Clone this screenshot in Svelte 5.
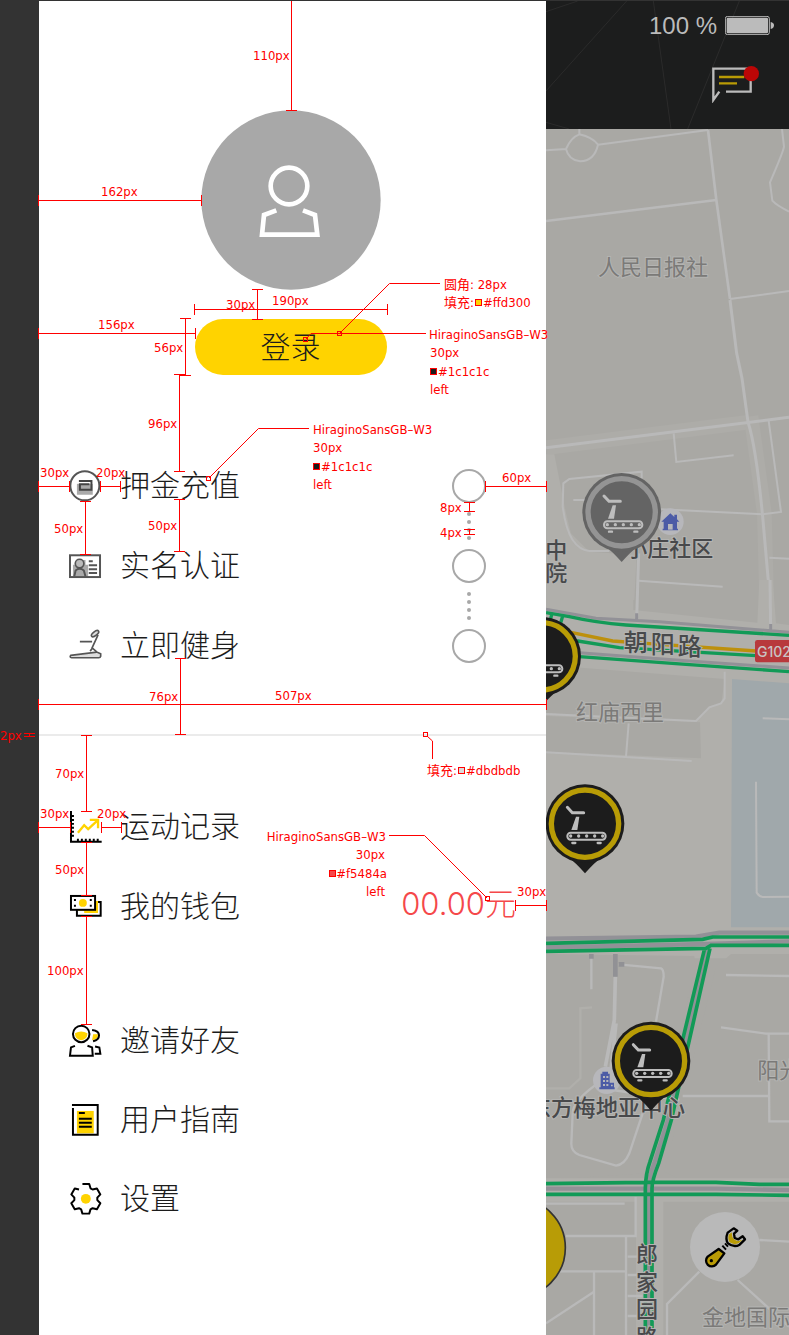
<script>
  const account = [
    { label: '押金充值', icon: 'deposit' },
    { label: '实名认证', icon: 'identity' },
    { label: '立即健身', icon: 'treadmill' }
  ];
  const records = [
    { label: '运动记录', icon: 'chart' },
    { label: '我的钱包', icon: 'wallet', amount: '00.00元' }
  ];
  const more = [
    { label: '邀请好友', icon: 'friends' },
    { label: '用户指南', icon: 'guide' },
    { label: '设置', icon: 'gear' }
  ];

  const pins = [
    { x: 227, y: 1537, off: true },
    { x: -13, y: 1969 },
    { x: 117, y: 2471 },
    { x: 315, y: 3183 }
  ];

  // Horizontal measures: x1, x2, y
  const across = [
    [38, 201, 200], [194, 387, 309], [38, 195, 333], [38, 69, 486], [100, 120, 486],
    [485, 546, 486], [38, 546, 704], [38, 70, 827], [101, 121, 827], [515, 546, 905]
  ];
  // Vertical measures: x, y1, y2
  const down = [
    [291, 0, 110], [257, 289, 319], [185, 318, 375], [179, 374, 471], [85, 501, 554],
    [179, 499, 551], [469, 502, 511], [469, 529, 534], [180, 658, 734], [29, 733, 736],
    [86, 735, 811], [86, 842, 895], [86, 916, 1024]
  ];
  const notes = [
    [253, 60, '110px'], [101, 196, '162px'], [226, 309, '30px'], [272, 305, '190px'],
    [98, 329, '156px'], [154, 352, '56px'], [148, 428, '96px'], [40, 477, '30px'],
    [96, 477, '20px'], [54, 533, '50px'], [148, 530, '50px'], [502, 482, '60px'],
    [440, 512, '8px'], [440, 537, '4px'], [149, 701, '76px'], [275, 700, '507px'],
    [0, 740, '2px'], [55, 778, '70px'], [40, 818, '30px'], [97, 818, '20px'],
    [55, 874, '50px'], [517, 896, '30px'], [47, 975, '100px'],
    [444, 289, '圆角: 28px'], [444, 307, '填充:'], [483, 307, '#ffd300'],
    [429, 339, 'HiraginoSansGB–W3'], [430, 357, '30px'], [438, 376, '#1c1c1c'], [430, 394, 'left'],
    [313, 434, 'HiraginoSansGB–W3'], [313, 452, '30px'], [321, 471, '#1c1c1c'], [313, 489, 'left'],
    [427, 775, '填充:'], [466, 775, '#dbdbdb']
  ];
  const endNotes = [
    [386, 841, 'HiraginoSansGB–W3'], [385, 859, '30px'], [387, 878, '#f5484a'], [385, 896, 'left']
  ];
  const swatches = [
    [475, 299, '#ffd300'], [430, 368, '#1c1c1c'], [313, 463, '#1c1c1c'],
    [458, 767, '#dbdbdb'], [329, 870, '#f5484a']
  ];
  const leaders = [
    'M440 283.5H389.5L340 333', 'M426 333.5H311L306 339', 'M309 428.5H258.5L209 478',
    'M427 736L432.5 741V759', 'M389 835.5H424.5L487 898'
  ];
  const targets = [[339, 333], [305, 339], [208, 478], [425, 734], [487, 898]];

  const gear = Array.from({ length: 6 }, (_, k) =>
    [[-24, 35], [-13, 46], [13, 46], [24, 35]].map(([a, r]) => {
      const t = ((k * 60 + a - 90) * Math.PI) / 180;
      return `${(51 + r * Math.cos(t)).toFixed(1)},${(48 + r * Math.sin(t)).toFixed(1)}`;
    })
  ).flat().slice(1).join(' ');
</script>

{#snippet icon(name)}
  <svg class="icon" viewBox="0 0 100 100" aria-hidden="true">
    {#if name === 'deposit'}
      <circle cx="48" cy="48" r="44" fill="#fff" stroke="#555" stroke-width="6" />
      <path d="M24 42H72V75H24Z" fill="#aaa" />
      <path d="M30 33H68V60H33V43H62" fill="none" stroke="#444" stroke-width="6" />
    {:else if name === 'identity'}
      <path d="M12 45H30V30H50V45H58V80H12Z" fill="#aaa" />
      <rect x="3" y="16" width="91" height="66" fill="none" stroke="#555" stroke-width="6" />
      <circle cx="32" cy="41" r="13" fill="#bbb" stroke="#555" stroke-width="5" />
      <path d="M16 80L20 62Q32 52 45 62L50 80M60 34H72M60 46H85M60 58H85M60 70H85" fill="none" stroke="#555" stroke-width="6" />
    {:else if name === 'treadmill'}
      <path d="M5 77L84 67L96 72V80Q95 84 90 84H8Q1 83 5 77Z" fill="#ddd" stroke="#555" stroke-width="5" />
      <path d="M33 35H70M88 15L70 54L84 66M72 54L64 64" fill="none" stroke="#555" stroke-width="5" />
      <ellipse cx="79" cy="11" rx="13" ry="6" transform="rotate(-38 79 11)" fill="#ddd" stroke="#555" stroke-width="5" />
    {:else if name === 'chart'}
      <path d="M6 0V93H99M9 15H15M9 27H15M9 39H15M9 51H15M9 63H15M9 75H15M27 90V84M39 90V84M51 90V84M63 90V84M75 90V84M87 90V84" fill="none" stroke="#000" stroke-width="6" />
      <path d="M27 66L46 43L58 55L86 29M63 27H88V52" fill="none" stroke="#ffd300" stroke-width="7" />
    {:else if name === 'wallet'}
      <path d="M24 54V75H96V33H82" fill="none" stroke="#000" stroke-width="6" />
      <path d="M27 57H81V30H88V67H46V60H27Z" fill="#ffd300" />
      <rect x="6" y="15" width="73" height="42" fill="#fff" stroke="#000" stroke-width="6" />
      <circle cx="42" cy="36" r="12" fill="#ffd300" />
      <path d="M15 24h6v6h-6zM15 42h6v6h-6zM63 24h6v6h-6zM63 42h6v6h-6z" />
    {:else if name === 'friends'}
      <path d="M18 25Q37 15 56 25Q56 45 37 46Q18 45 18 25Z" fill="#ffd300" />
      <circle cx="37" cy="27" r="25" fill="none" stroke="#000" stroke-width="6" />
      <path d="M73 28H88Q88 44 70 46Z" fill="#ffd300" />
      <path d="M18 63L6 68L3 93H72L70 68L56 63M70 15Q91 18 91 31Q91 45 73 49M79 65L92 68L95 87H78" fill="none" stroke="#000" stroke-width="6" />
    {:else if name === 'guide'}
      <path d="M24 21H75V89H24Z" fill="#ffd300" />
      <path d="M9 3H87V93H12V12M30 27H48M30 45H69M30 57H69M30 69H69" fill="none" stroke="#000" stroke-width="6" />
    {:else}
      <polyline points={gear} fill="none" stroke="#000" stroke-width="6" stroke-linejoin="round" />
      <circle cx="51" cy="48" r="15" fill="#ffd300" />
    {/if}
  </svg>
{/snippet}

{#snippet menu(items)}
  <ul class="menu">
    {#each items as item}
      <li>
        <a href="#{item.icon}">
          {@render icon(item.icon)}
          <span>{item.label}</span>
          {#if item.amount}<strong>{item.amount}</strong>{/if}
        </a>
      </li>
    {/each}
  </ul>
{/snippet}

<div class="page">
  <div class="edge"></div>

  <nav class="drawer">
    <div class="profile">
      <svg class="avatar" viewBox="0 0 540 540" aria-hidden="true">
        <circle cx="270" cy="270" r="269" fill="#a8a8a8" />
        <g fill="none" stroke="#fff" stroke-width="14">
          <circle cx="264" cy="228" r="55" />
          <path d="M226 301L189 315L183 374H349L342 315L306 301" />
        </g>
      </svg>
      <button class="login" type="button">登录</button>
    </div>

    <div class="account">
      {@render menu(account)}
      <div class="steps">
        <i class="ring"></i>
        <span class="dots"><i></i><i></i><i></i><i></i></span>
        <i class="ring"></i>
        <span class="dots"><i></i><i></i><i></i><i></i></span>
        <i class="ring"></i>
      </div>
    </div>
    <hr />
    {@render menu(records)}
    <div class="more">{@render menu(more)}</div>
  </nav>

  <main>
    <header>
      <svg class="rays" viewBox="0 0 729 384" preserveAspectRatio="xMinYMin slice" aria-hidden="true">
        <path d="M0 270L242 0M322 0L375 384M580 0L425 384M0 32L95 0M0 364L70 384" fill="none" stroke="#2b2b2b" stroke-width="3" />
      </svg>
      <div class="status">
        <span>100 %</span>
        <svg width="49" height="19" viewBox="0 0 147 57" aria-hidden="true">
          <rect x="1" y="1" width="132" height="55" rx="7" fill="none" stroke="#bbb" stroke-width="3" />
          <rect x="5" y="5" width="124" height="47" rx="4" fill="#bbb" />
          <path d="M137 18Q147 20 147 28Q147 37 137 39Z" fill="#bbb" />
        </svg>
      </div>
      <button class="message" type="button" aria-label="消息">
        <svg width="47" height="37" viewBox="0 0 141 111" aria-hidden="true">
          <path d="M42 77H116V8H4V102L22 77" fill="none" stroke="#bbb" stroke-width="7" />
          <path d="M21 33H97M21 52H75" stroke="#b99b05" stroke-width="7" />
          <circle cx="118" cy="23" r="23" fill="#bb0606" />
        </svg>
      </button>
    </header>

    <section class="map">
      <svg class="chart" viewBox="0 387 729 3618" preserveAspectRatio="xMinYMin slice">
        <rect width="729" height="4005" fill="#a9a8a4" />
        <g fill="none" stroke="#b9b9b9" stroke-width="6">
          <path d="M0 663L511 600M486 390L511 600L552 897" stroke-width="8" />
          <path d="M552 897L729 873M0 451L60 447Q75 412 100 403Q140 412 156 434Q145 483 102 484Q68 480 60 447M100 403V387M156 434L486 390M708 387L714 440Q712 455 672 547L679 602Q690 615 729 635" />
        </g>
        <g transform="translate(0 900)">
          <path d="M0 443L606 367" stroke="#adaca8" stroke-width="44" />
          <path d="M615 349L655 640L662 900" fill="none" stroke="#adaca8" stroke-width="44" />
          <path d="M0 463H25L60 640L75 700L130 755L272 765L265 900H0Z" fill="#b0afab" />
          <g fill="none" stroke="#b9b9b9" stroke-width="6">
            <path d="M552 0L572 160L588 235L606 366Q630 440 650 650L672 900M0 443L729 352" stroke-width="9" />
            <path d="M383 400L391 486L563 466M668 362L705 636L650 643L345 628M287 535V515L70 537L52 550L50 620Q60 690 80 720Q100 750 130 753H190M82 600H130M670 773L729 776" />
          </g>
        </g>
        <g transform="translate(0 1740)">
          <path d="M0 0H262V90L634 128L640 0H680L690 130L729 135V1135H0Z" fill="#b0afab" />
          <path d="M0 255L536 297L526 370L490 380L450 423L0 400ZM0 408L462 427L465 535L0 515Z" fill="#a9a8a4" />
          <path d="M558 297L729 310V1042H555Z" fill="#a0a8ab" />
          <g fill="none" stroke="#b9b9b9" stroke-width="6">
            <path d="M278 -80L272 118M672 0L674 150" stroke-width="9" />
            <path d="M278 2L530 20M536 275V355L525 370L490 382L450 423L0 402M248 430L240 530M0 517L437 543M650 415L729 418M630 605L632 938Q640 950 650 951L729 950" />
          </g>
          <path d="M0 88L150 115L340 125L729 157M0 213L100 218L420 242L729 264M272 100V125M674 132V155" fill="none" stroke="#929197" stroke-width="9" />
          <path d="M0 98L70 110Q150 128 240 135L729 166M0 160L95 183L220 203L630 227M18 100L8 140M50 108L38 150M0 223L100 230L420 253L729 275" fill="none" stroke="#129a57" stroke-width="10" />
          <path d="M60 154L200 183L300 190L630 213" fill="none" stroke="#bd900c" stroke-width="10" />
          <rect x="627" y="180" width="120" height="67" rx="7" fill="#b8393c" />
          <text class="badge" x="633" y="230">G102</text>
        </g>
        <g transform="translate(0 2640)">
          <path d="M0 222L445 228L448 260L300 880L0 900ZM555 222H729V900L400 898L355 875L510 262Z" fill="#a9a8a4" />
          <path d="M270 950H352V1365H270ZM0 895H729V965H0Z" fill="#b0afab" />
          <g fill="none" stroke="#b9b9b9" stroke-width="7">
            <path d="M208 290L205 420M205 420L178 560M210 430L195 570" stroke-width="11" />
            <path d="M136 222V328M218 253L345 265Q353 268 353 290L330 425M540 285L729 288M525 442L660 461H729M668 461L670 724H729M410 648H668M200 630L400 660M170 600Q80 660 80 700L76 790Q75 815 100 825L210 857Q235 855 250 820L290 700" />
            <path d="M0 971H236M269 950V1068H60M240 1068V1365M20 1174H240M144 1175V1365M0 1330L144 1235M245 1130H290M245 1185H290M245 1248H290M245 1308H290M640 1080L729 1085M460 1175L363 1272V1365M575 1200L729 1340" />
            <path d="M0 625H70L103 595V385L138 382" stroke="#b0afab" />
          </g>
          <path d="M208 222V290M136 222V236M218 253H235" fill="none" stroke="#919195" stroke-width="14" />
          <path d="M0 176L450 170L520 158H729M0 202L480 192L729 184M484 205L366 720L325 850Q308 890 308 925V1365M0 926H510L729 930" fill="none" stroke="#929197" stroke-width="13" />
          <path d="M0 190L470 178L500 171H729M0 214L480 205L495 196H729M476 205L352 720L312 845Q299 880 298 925V1365M492 205L376 720L338 850Q318 900 318 925V1365M0 911L300 907H510L640 913H729M0 943H510L729 946" fill="none" stroke="#129a57" stroke-width="11" />
        </g>

        <g class="names soft">
          <text x="156" y="825">人民日报社</text>
          <text x="90" y="2161">红庙西里</text>
          <text x="634" y="3234">阳光</text>
          <text x="468" y="3976">金地国际</text>
        </g>
        <g class="names">
          <text x="238" y="1669">小庄社区</text>
          <text x="-2" y="1674">中</text>
          <text x="-2" y="1744">院</text>
          <text class="centre" x="-52" y="3347">东方梅地亚中心</text>
          <text class="road" x="233 314 395" y="1952 1958 1964">朝阳路</text>
          <text x="270 270 270 270" y="3786 3869 3952 4034">郎家园路</text>
        </g>

        <g transform="translate(373 1565)">
          <circle r="40" fill="#b7b7bb" />
          <path d="M-27 0L0 -25L12 -14V-21H20V-7L27 0H20V21H23V26H-23V21H-20V0Z" fill="#4c5ba6" />
          <path d="M-7 7H7V24H-7Z" fill="#b7b7bb" />
        </g>
        <g transform="translate(182 3241)">
          <circle r="41" fill="#b7b7bb" />
          <path d="M-18 21V-20H-13V-26H4V-20H9V7H22V21H24V27H-22V21Z" fill="#4c5ba6" />
          <path d="M-11 -13h6v6h-6zM-1 -13h6v6h-6zM-11 -1h6v6h-6zM-1 -1h6v6h-6zM-11 11h6v6h-6zM-1 11h6v6h-6zM13 13h5v5h-5z" fill="#b7b7bb" />
        </g>

        {#each pins as pin}
          <g transform="translate({pin.x} {pin.y})" fill={pin.off ? '#646464' : '#1c1c1c'}>
            <path d="M-48 103Q-30 115 0 149Q30 115 48 103Z" />
            <circle r="118" />
            <circle r="101" stroke={pin.off ? '#949494' : '#b89c06'} stroke-width="16" />
            <g stroke="#bdbdbd" stroke-width="9" stroke-linecap="round">
              <path d="M-53 -49L-38 -33H-4" fill="none" />
              <rect x="-53" y="27" width="115" height="21" rx="10" stroke-width="6" fill="none" />
              <path d="M-38 58H-29M38 58H47" stroke-width="7" />
            </g>
            <path d="M-27 -21H-17L-23 19H-41Z" fill="#bdbdbd" />
            {#each [-43, -19, 5, 29, 53] as cx}<circle {cx} cy="37" r="5" fill="#bdbdbd" />{/each}
          </g>
        {/each}
        <circle cx="-91" cy="3743" r="149" fill="#b89c06" stroke="#333" stroke-width="5" />
      </svg>

      <button class="repair" type="button" aria-label="报修">
        <svg viewBox="0 0 210 210" aria-hidden="true">
          <g stroke="#000" stroke-width="7" stroke-linejoin="round">
            <path d="M86 111L53 134A16 16 0 1 0 78 158L103 124Z" fill="#b99b05" />
            <path d="M131 49L113 62Q105 82 114 94Q132 108 149 98L165 82L158 73L145 82L134 78L132 65L142 56Z" fill="#b9b9b9" />
            <path d="M97 101L108 113M105 94L114 104" fill="none" stroke-width="6" />
          </g>
          <path d="M116 68Q113 82 119 91Q132 100 146 94L157 83L145 87Q130 84 127 74L125 61Z" fill="#b99b05" />
          <circle cx="64" cy="146" r="5" />
        </svg>
      </button>
    </section>
  </main>

  <svg class="specs" aria-hidden="true">
    <g stroke="#f00" fill="none">
      {#each across as [a, b, y]}
        <path d="M{a} {y + 0.5}H{b + 1}M{a + 0.5} {y - 5}V{y + 6}M{b + 0.5} {y - 5}V{y + 6}" />
      {/each}
      {#each down as [x, a, b]}
        <path d="M{x + 0.5} {a}V{b + 1}M{x - 5} {a + 0.5}H{x + 6}M{x - 5} {b + 0.5}H{x + 6}" />
      {/each}
      {#each leaders as d}<path {d} />{/each}
      {#each targets as [x, y]}<rect x={x - 1.5} y={y - 1.5} width="4" height="4" />{/each}
      {#each swatches as [x, y, fill]}<rect x={x + 0.5} y={y + 0.5} width="6" height="6" {fill} />{/each}
    </g>
    {#each notes as [x, y, note]}<text {x} {y}>{note}</text>{/each}
    {#each endNotes as [x, y, note]}<text {x} {y} text-anchor="end">{note}</text>{/each}
  </svg>
</div>

<style>
  :global(body) { margin: 0; }
  .page {
    position: relative;
    box-sizing: border-box;
    min-height: 100vh;
    display: grid;
    grid-template-columns: 39px 507px minmax(0, 1fr);
    border-top: 1px solid #333;
    overflow: hidden;
    font-family: "Noto Sans CJK SC", "Noto Sans", sans-serif;
  }
  .edge { background: #333; }
  .drawer { background: #fff; padding: 109px 0 120px; }
  .profile {
    display: flex;
    flex-direction: column;
    align-items: center;
    gap: 29px;
    padding-right: 4px;
  }
  .avatar { width: 180px; height: 180px; }
  button { border: 0; padding: 0; background: none; font: inherit; }
  .login {
    width: 192px;
    height: 56px;
    padding-bottom: 4px;
    border-radius: 28px;
    background: #ffd300;
    color: #1c1c1c;
    font-size: 30px;
    font-weight: 300;
    line-height: 52px;
  }
  .account { display: flex; align-items: center; padding: 94px 60px 71px 0; }
  .account :global(.menu) { flex: 1; }
  .menu {
    list-style: none;
    margin: 0;
    padding: 0 30px;
    display: flex;
    flex-direction: column;
    gap: 48px;
  }
  .menu a {
    display: flex;
    align-items: center;
    gap: 18px;
    height: 32px;
    color: #1c1c1c;
    text-decoration: none;
    font-size: 30px;
    font-weight: 300;
    line-height: 32px;
  }
  .menu span, .menu strong { padding-bottom: 6px; }
  .menu strong {
    margin-left: auto;
    color: #f5484a;
    font-family: Inter, "Noto Sans CJK SC", sans-serif;
    font-size: 31px;
    font-weight: 300;
  }
  .icon { width: 33px; height: 33px; overflow: visible; }
  .steps { display: flex; flex-direction: column; align-items: center; }
  .ring {
    box-sizing: border-box;
    width: 34px;
    height: 34px;
    border: 2px solid #a8a8a8;
    border-radius: 50%;
  }
  .dots { display: flex; flex-direction: column; gap: 4px; padding: 9px 0; }
  .dots i { width: 4px; height: 4px; border-radius: 50%; background: #a8a8a8; }
  hr { height: 2px; margin: 0 0 75px; border: 0; background: #ebebeb; }
  .more { padding-top: 102px; }
  .more :global(.menu) { gap: 47px; }

  main { display: flex; flex-direction: column; min-width: 0; }
  header {
    position: relative;
    display: flex;
    flex-direction: column;
    align-items: flex-end;
    gap: 31px;
    padding: 15px 15px 26px;
    background: #1c1d1d;
  }
  .rays { position: absolute; inset: 0; width: 100%; height: 100%; }
  .status {
    position: relative;
    display: flex;
    align-items: center;
    gap: 8px;
    height: 19px;
    color: #bbb;
    font: 24px/19px "Liberation Sans", sans-serif;
  }
  .message { position: relative; margin-right: 15px; height: 37px; }
  header svg { display: block; }
  .map { position: relative; flex: 1; overflow: hidden; }
  .chart { position: absolute; inset: 0; width: 100%; height: 100%; }
  .names text {
    font-size: 66px;
    font-weight: 500;
    fill: #48494b;
    stroke: #b4b4b2;
    stroke-width: 6px;
    paint-order: stroke;
  }
  .names .road { font-size: 72px; }
  .names .centre { font-size: 67px; }
  .names.soft text { fill: #7b7a78; font-weight: 400; }
  .badge { font: 500 42px Inter, sans-serif; fill: #c9c4c4; }
  .repair {
    position: absolute;
    right: 29px;
    bottom: 53px;
    width: 70px;
    height: 70px;
    border-radius: 50%;
    background: #b9b9b9;
  }
  .repair svg { display: block; }
  .specs {
    position: absolute;
    inset: -1px 0 0;
    width: 100%;
    height: 100%;
    pointer-events: none;
  }
  .specs text {
    fill: #f00;
    font: 13px "DejaVu Sans Condensed", "Noto Sans CJK SC", sans-serif;
  }
</style>
